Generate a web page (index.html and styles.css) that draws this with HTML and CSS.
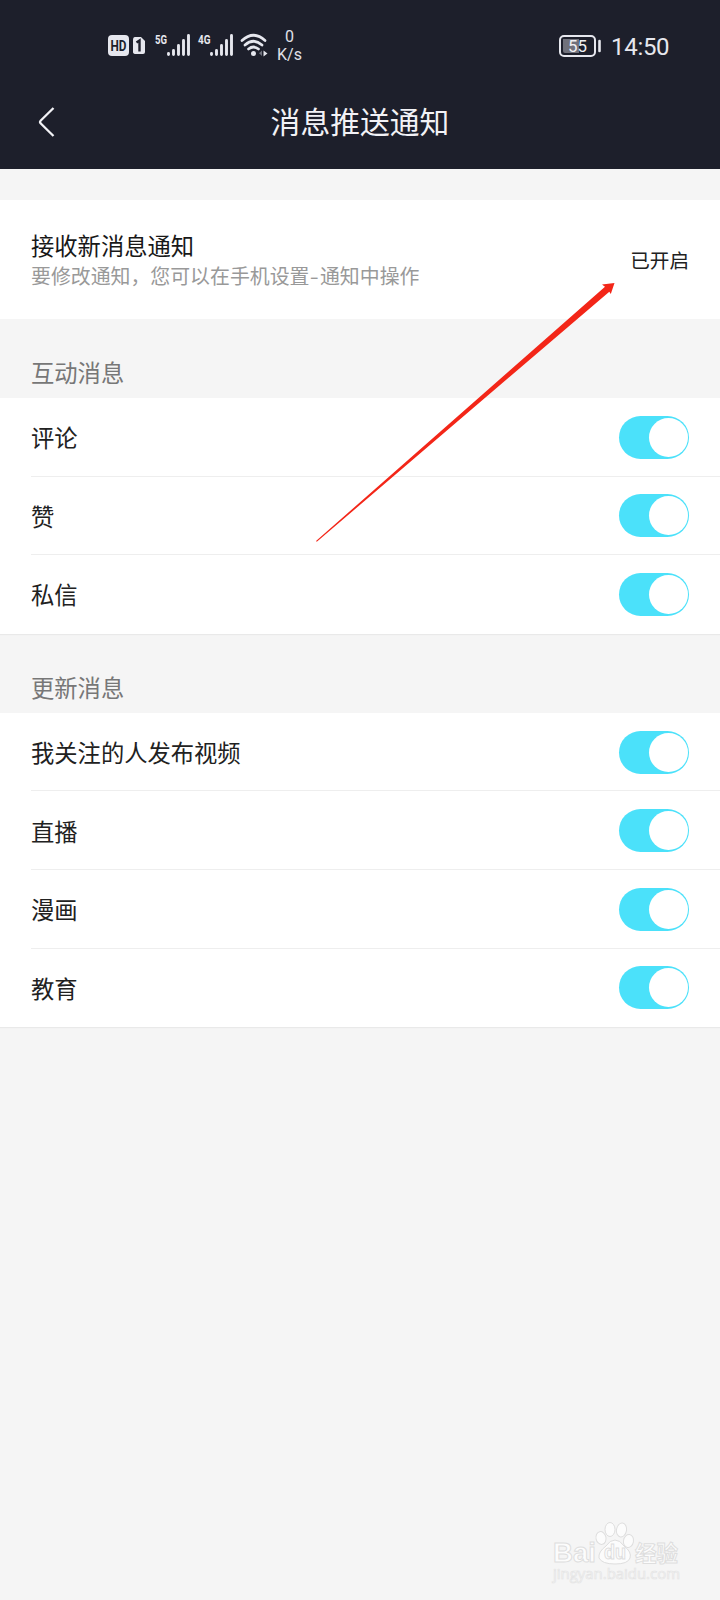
FILE: index.html
```html
<!DOCTYPE html>
<html lang="zh-CN">
<head>
<meta charset="utf-8">
<title>消息推送通知</title>
<link rel="stylesheet" href="styles.css">
</head>
<body>
<div class="screen">
  <header class="header">
    <div class="status">
      <svg class="status-icons" width="162" height="26" viewBox="0 0 162 26">
        <g fill="#e6e7ee">
          <rect x="0" y="3" width="21" height="21" rx="4"/>
          <path d="M27 5h6l4 4v11q0 2-2 2h-7q-3 0-3-2V8q0-3 2-3z"/>
        </g>
        <text class="hd" x="10.500" y="18.500" textLength="16" lengthAdjust="spacingAndGlyphs">HD</text>
        <path d="M28.500 10.500l3-2v11" fill="none" stroke="#1d1f2b" stroke-width="2.400"/>
        <text class="net" x="47" y="12" textLength="12" lengthAdjust="spacingAndGlyphs">5G</text>
        <text class="net" x="90" y="12" textLength="12.500" lengthAdjust="spacingAndGlyphs">4G</text>
        <g stroke="#e6e7ee" stroke-width="2.900" stroke-linecap="round">
          <path d="M60.500 21.500v1M65.500 18.500v4M70.500 13.500v9M75.500 8.500v14M80.500 3.500v19"/>
          <path d="M103.500 21.500v1M108.500 18.500v4M113.500 13.500v9M118.500 8.500v14M123.500 3.500v19"/>
        </g>
        <g fill="none" stroke="#e6e7ee" stroke-width="2.700" stroke-linecap="round">
          <path d="M134 8.500q11.500-10.500 23 0"/>
          <path d="M137 13q8.500-7.500 17 0"/>
          <path d="M140.500 17q5-4 10 0"/>
        </g>
        <circle cx="145.500" cy="21.500" r="2.500" fill="#e6e7ee"/>
        <path d="M154 18.500v5.500l-3-2.700z" fill="#70727e"/>
        <path d="M155.500 18.500v6l4-3z" fill="#e6e7ee"/>
      </svg>
      <div class="speed"><span>0</span><span>K/s</span></div>
      <svg class="battery" width="44" height="22" viewBox="0 0 44 22">
        <rect x="1" y="1" width="35" height="20" rx="4" fill="none" stroke="#e6e7ee" stroke-width="2"/>
        <path d="M4 4h16v14H6q-2 0-2-2z" fill="#70717b"/>
        <path d="M40.500 6v10" stroke="#e6e7ee" stroke-width="2.600" stroke-linecap="round"/>
        <text class="level" x="18.500" y="17" textLength="19" lengthAdjust="spacingAndGlyphs">55</text>
      </svg>
      <time class="time">14:50</time>
    </div>
    <div class="nav">
      <svg class="back" width="20" height="32" viewBox="0 0 20 32"><path d="M15.500 2L2.800 14.500q-1.500 1.500 0 3L15.500 30" fill="none" stroke="#f2f2f6" stroke-width="2.300"/></svg>
      <h1 class="title">消息推送通知</h1>
    </div>
  </header>

  <main>
    <section class="notice">
      <div>
        <div class="notice-title">接收新消息通知</div>
        <div class="notice-desc">要修改通知，您可以在手机设置<span class="dash">-</span>通知中操作</div>
      </div>
      <div class="state">已开启</div>
    </section>

    <h2 class="group-title">互动消息</h2>
    <ul class="group">
      <li class="row"><span>评论</span><i class="toggle"></i></li>
      <li class="row"><span>赞</span><i class="toggle"></i></li>
      <li class="row"><span>私信</span><i class="toggle"></i></li>
    </ul>

    <h2 class="group-title">更新消息</h2>
    <ul class="group">
      <li class="row"><span>我关注的人发布视频</span><i class="toggle"></i></li>
      <li class="row"><span>直播</span><i class="toggle"></i></li>
      <li class="row"><span>漫画</span><i class="toggle"></i></li>
      <li class="row"><span>教育</span><i class="toggle"></i></li>
    </ul>
  </main>

  <svg class="arrow" width="300" height="262" viewBox="0 0 300 262">
    <path d="M0 258L289 3.800L286 1.500L298.500 0L294.800 11L293.300 8.700L0.800 258.800z" fill="#f32618"/>
  </svg>

  <svg class="watermark" width="136" height="64" viewBox="0 0 136 64">
    <g fill="#fcfcfc" stroke="#dedede" stroke-width="1">
      <text class="wm-bai" x="1" y="41" textLength="43" lengthAdjust="spacingAndGlyphs">Bai</text>
      <ellipse cx="49" cy="17" rx="5" ry="6.500" transform="rotate(-12 49 17)"/>
      <ellipse cx="58" cy="8.500" rx="5" ry="7"/>
      <ellipse cx="69.500" cy="9" rx="5" ry="7" transform="rotate(10 69.500 9)"/>
      <ellipse cx="76.500" cy="20" rx="5" ry="6.500" transform="rotate(10 76.500 20)"/>
      <path d="M63 19q5 0 9 6q8 6 6 12q-2 6-15 6t-16-6q-1-6 7-12q4-6 9-6z"/>
      <text class="wm-du" x="52" y="38" textLength="22" lengthAdjust="spacingAndGlyphs">du</text>
      <text class="wm-cn" x="83" y="39.500" textLength="43" lengthAdjust="spacingAndGlyphs">经验</text>
    </g>
    <text class="wm-url" x="1" y="58" textLength="127" lengthAdjust="spacingAndGlyphs">jingyan.baidu.com</text>
  </svg>
</div>
</body>
</html>
```
FILE: styles.css
```css
* { box-sizing: border-box; }

body {
  margin: 0;
  font-family: "Noto Sans CJK SC", sans-serif;
  color: #212121;
}

.screen {
  position: relative;
  width: 720px;
  height: 1600px;
  overflow: hidden;
  background: #f5f5f5;
}

/* Status bar and title */
.header {
  height: 169px;
  background: #1d1f2b;
  color: #f2f2f6;
}

.status {
  display: flex;
  align-items: flex-start;
  height: 76px;
  padding: 32px 49px 0 108px;
}

.speed {
  display: flex;
  flex-direction: column;
  align-items: center;
  width: 25px;
  margin: -4px 0 0 7px;
  font: 16px/18px Roboto, sans-serif;
  color: #e0e1e8;
}

.battery { margin: 3px 8px 0 auto; }

.time {
  width: 60px;
  margin-top: 1px;
  font: 24px/28px Roboto, sans-serif;
  letter-spacing: -0.3px;
  color: #e6e7ee;
}

.hd {
  font: 700 14px Roboto, sans-serif;
  text-anchor: middle;
  fill: #1d1f2b;
}

.net {
  font: 700 13px Roboto, sans-serif;
  fill: #e6e7ee;
}

.level {
  font: 400 17px Roboto, sans-serif;
  text-anchor: middle;
  fill: #f0f0f4;
}

.nav {
  display: grid;
  grid-template-columns: 38px 1fr 38px;
  align-items: center;
  height: 93px;
  padding-bottom: 1px;
}

.back { justify-self: end; margin-right: -20px; }

.title {
  margin: 0;
  padding-bottom: 5px;
  font-size: 29.800px;
  font-weight: 400;
  line-height: 44px;
  text-align: center;
}

/* Notification state */
.notice {
  display: flex;
  justify-content: space-between;
  align-items: center;
  height: 119px;
  margin-top: 31px;
  padding: 0 31px;
  background: #fff;
}

.notice-title {
  font-size: 23.300px;
  line-height: 30px;
  color: #181818;
}

.notice-desc {
  padding-top: 1px;
  font-size: 19.900px;
  line-height: 29px;
  color: #999;
}

.dash {
  display: inline-block;
  width: 10.500px;
  text-align: center;
  transform: scaleX(1.300);
}

.state {
  font-size: 19.600px;
  line-height: 28px;
}

/* Switch lists */
.group-title {
  height: 79px;
  margin: 0;
  padding: 38px 31px 0;
  font-size: 23.300px;
  font-weight: 400;
  line-height: 30px;
  color: #777;
}

.group {
  margin: 0;
  padding: 0 0 0 31px;
  list-style: none;
  background: #fff;
  box-shadow: 0 1px 1px #e9e9e9;
}

.row {
  display: flex;
  justify-content: space-between;
  align-items: center;
  height: 78.600px;
  padding-right: 31px;
  font-size: 23.300px;
  line-height: 30px;
}

.row + .row { box-shadow: 0 -1px 0 #eee; }

.toggle {
  display: flex;
  justify-content: flex-end;
  width: 70px;
  height: 43px;
  padding: 2px 1.500px;
  border-radius: 22px;
  background: #4be1fa;
}

.toggle::after {
  content: "";
  width: 39px;
  height: 39px;
  border-radius: 50%;
  background: #fff;
}

/* Overlays */
.arrow {
  position: absolute;
  left: 316px;
  top: 283px;
}

.watermark {
  position: absolute;
  left: 552px;
  top: 1521px;
  overflow: visible;
}

.wm-bai { font: 700 28px "Liberation Sans", sans-serif; }
.wm-du { font: 700 20px "Liberation Sans", sans-serif; }
.wm-cn { font: 700 22px "Noto Sans CJK SC", sans-serif; }

.wm-url {
  font: 15px "Open Sans", sans-serif;
  fill: #fafafa;
  stroke: #e4e4e4;
  stroke-width: 0.700px;
}
```
